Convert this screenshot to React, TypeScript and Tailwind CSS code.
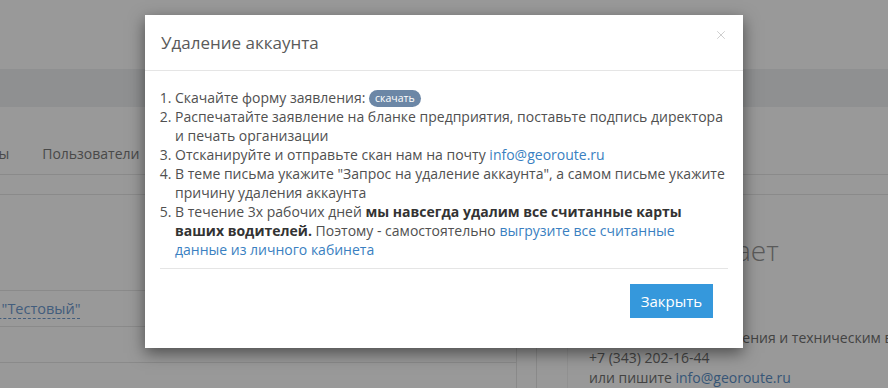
import { X } from 'lucide-react';

const link = 'text-[#3a7fc1]';

function Background() {
  return (
    <div className="flex h-full flex-col">
      {/* Top header */}
      <div className="h-[70px] bg-white" />
      <div className="h-[38px] bg-[#eef0f2]" />

      {/* Nav */}
      <div className="flex h-[69px] items-start gap-[33px] border-b border-[#e6e6e6] pt-[37px] text-[14px] leading-[19px] text-[#7a7a7a]">
        <span className="-ml-[42px]">Отчеты</span>
        <span>Пользователи</span>
        <span>Настройки</span>
      </div>
      <div className="h-[20px] border-b border-[#e6e6e6]" />

      {/* Content */}
      <div className="flex flex-1">
        <div className="flex w-[517px] shrink-0 flex-col border-r border-[#e6e6e6] pt-[95px]">
          <div className="flex h-[36px] items-start border-t border-[#e6e6e6] pt-[9px] text-[14.5px] text-[#7a7a7a]">
            <span className="-ml-[36px] border-b border-dashed border-[#6f9bd0] leading-[18px] text-[#6f9bd0]">
              ООО "Тестовый"
            </span>
          </div>
          <div className="h-[36px] border-t border-[#e6e6e6]" />
          <div className="flex-1 border-t border-[#e6e6e6]" />
        </div>
        <div className="w-[20px] shrink-0 border-r border-[#e6e6e6]" />
        <div className="ml-[30px] flex min-w-0 flex-1 flex-col border-l border-[#f2f2f2] pl-[21px]">
          <div className="ml-[8px] mt-[36px] whitespace-nowrap text-[28px] font-light leading-[38px] text-[#969696]">
            Вам помогает
          </div>
          <div className="mt-[59px] whitespace-nowrap text-[14px] leading-[20px] text-[#707070]">
            <div>По вопросам подключения и техническим вопросам</div>
            <div>+7 (343) 202-16-44</div>
            <div>
              или пишите <span className="text-[#5b8fc7]">info@georoute.ru</span>
            </div>
          </div>
        </div>
      </div>
    </div>
  );
}

function DeleteAccountModal() {
  return (
    <div className="absolute left-[145px] top-[15px] w-[598px] bg-white shadow-[0_5px_15px_rgba(0,0,0,0.5)]">
      {/* Header */}
      <div className="flex h-[56px] items-center justify-between border-b border-[#e5e5e5] pl-[16px] pr-[15px]">
        <h4 className="text-[17px] leading-[24px] text-[#5a5a5a]">Удаление аккаунта</h4>
        <X className="mb-[16px] h-[14px] w-[14px] text-[#c8c8c8]" strokeWidth={1.5} />
      </div>

      {/* Body */}
      <div className="px-[15px] pt-[17px]">
        <ol className="list-decimal pl-[15px] text-[14px] leading-[19px] text-[#505050]">
          <li>
            Скачайте форму заявления:{' '}
            <span className="inline-block rounded-full bg-[#6c87a6] px-[6px] align-[1px] text-[10.5px] leading-[17px] text-white">
              скачать
            </span>
          </li>
          <li>Распечатайте заявление на бланке предприятия, поставьте подпись директора и печать организации</li>
          <li>
            Отсканируйте и отправьте скан нам на почту <span className={link}>info@georoute.ru</span>
          </li>
          <li>В теме письма укажите "Запрос на удаление аккаунта", а самом письме укажите причину удаления аккаунта</li>
          <li>
            В течение 3х рабочих дней{' '}
            <b className="font-bold text-[#333]">мы навсегда удалим все считанные карты ваших водителей.</b> Поэтому -
            самостоятельно <span className={link}>выгрузите все считанные данные из личного кабинета</span>
          </li>
        </ol>
        <div className="mt-[9px] border-t border-[#e5e5e5]" />
      </div>

      {/* Footer */}
      <div className="flex justify-end pb-[30px] pr-[30px] pt-[15px]">
        <button className="h-[34px] w-[83px] bg-[#3598dc] text-[15px] text-white">Закрыть</button>
      </div>
    </div>
  );
}

export default function App() {
  return (
    <div className="relative h-[388px] w-[888px] overflow-hidden bg-white font-['Open_Sans',sans-serif]">
      <Background />
      <div className="absolute inset-0 bg-black/40" />
      <DeleteAccountModal />
    </div>
  );
}
